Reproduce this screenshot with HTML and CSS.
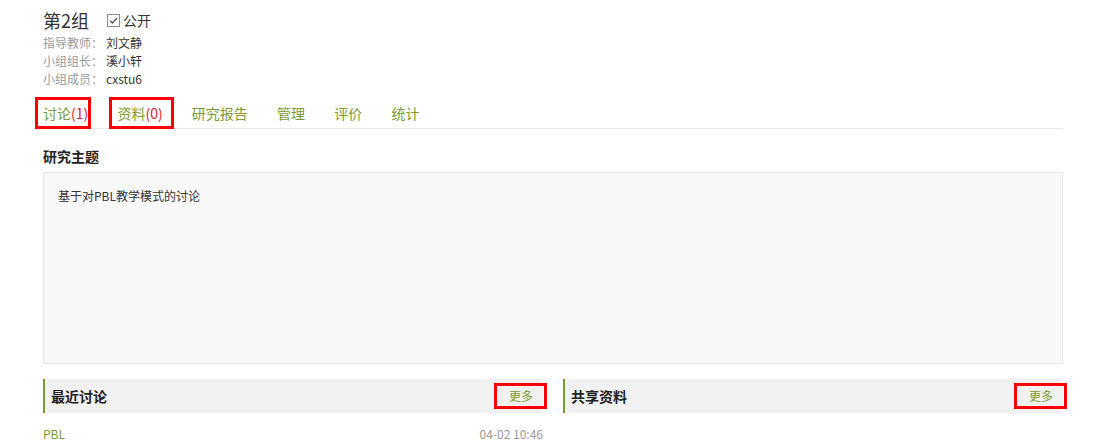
FILE: index.html
```html
<!DOCTYPE html>
<html lang="zh-CN">
  <head>
    <meta charset="UTF-8" />
    <meta name="viewport" content="width=device-width, initial-scale=1.0" />
    <title>第2组</title>
    <link rel="stylesheet" href="styles.css">
  </head>
  <body>
    <div class="page">
      <!-- 小组信息 -->
      <div class="group-head">
        <h1 class="group-name">第2组</h1>
        <label class="public">
          <svg class="check" width="13" height="13" viewBox="0 0 13 13">
            <rect x="0.5" y="0.5" width="12" height="12" fill="#fff" stroke="#8a8a8a" />
            <path d="M3 6.6 L5.4 9 L10 4" fill="none" stroke="#555" stroke-width="1.3" />
          </svg>
          公开
        </label>
      </div>
      <ul class="info">
        <li><span class="label">指导教师：</span>刘文静</li>
        <li><span class="label">小组组长：</span>溪小轩</li>
        <li><span class="label">小组成员：</span>cxstu6</li>
      </ul>

      <!-- 标签页 -->
      <nav class="tabs">
        <a class="tab"><span class="mark mark-1">讨论<span class="count">(1)</span></span></a>
        <a class="tab"><span class="mark mark-2">资料<span class="count">(0)</span></span></a>
        <a class="tab">研究报告</a>
        <a class="tab">管理</a>
        <a class="tab">评价</a>
        <a class="tab">统计</a>
      </nav>

      <!-- 研究主题 -->
      <h2 class="section-title">研究主题</h2>
      <div class="topic">基于对PBL教学模式的讨论</div>

      <!-- 讨论 / 资料 -->
      <div class="panels">
        <section class="panel">
          <div class="panel-head">
            <h3>最近讨论</h3>
            <a class="more mark">更多</a>
          </div>
          <div class="row">
            <a class="row-title">PBL</a>
            <span class="row-time">04-02 10:46</span>
          </div>
        </section>
        <section class="panel">
          <div class="panel-head">
            <h3>共享资料</h3>
            <a class="more mark">更多</a>
          </div>
        </section>
      </div>
    </div>
  </body>
</html>
```

FILE: styles.css
```css
/* ====================== RESET ====================== */
* {
  margin: 0;
  padding: 0;
  box-sizing: border-box;
}
body {
  font-family: "Microsoft YaHei", "Noto Sans CJK SC", sans-serif;
  font-size: 12px;
  color: #333;
  background: #fff;
}
ul {
  list-style: none;
}
a {
  text-decoration: none;
  cursor: pointer;
}

/* ====================== PAGE ====================== */
.page {
  width: 1020px;
  margin-left: 43px;
  padding-top: 8px;
}

/* ================== GROUP HEADER ================== */
.group-head {
  display: flex;
  align-items: center;
  height: 24px;
}
.group-name {
  font-size: 18px;
  font-weight: normal;
  line-height: 24px;
  color: #333;
}
.public {
  display: flex;
  align-items: center;
  gap: 3px;
  margin-left: 18px;
  font-size: 14px;
  line-height: 24px;
  color: #333;
}
.check {
  display: block;
}
.info {
  margin-top: 2px;
}
.info li {
  line-height: 18px;
}
.info .label {
  display: inline-block;
  width: 63px;
  color: #999;
}

/* ======================= TABS ======================= */
.tabs {
  display: flex;
  margin-top: 10px;
  margin-left: -8px;
  border-bottom: 1px solid #e8e8e8;
}
.tab {
  padding: 0 14.6px;
  font-size: 14px;
  line-height: 30px;
  color: #7a9b2e;
}
.tab:first-child {
  padding-left: 8px;
}
.tab .count {
  color: #e0202a;
}

/* 红框标注 */
.mark {
  position: relative;
}
.mark::after {
  content: "";
  position: absolute;
  border: 3px solid #f00;
  pointer-events: none;
}
.mark-1::after {
  left: -8px;
  right: -3px;
  top: -1px;
  bottom: -1px;
}
.mark-2::after {
  left: -8px;
  right: -11px;
  top: -1px;
  bottom: -1px;
}
.tab .mark {
  display: inline-block;
  line-height: 30px;
}

/* ===================== TOPIC ===================== */
.section-title {
  margin-top: 17px;
  font-size: 14px;
  line-height: 20px;
  color: #222;
}
.topic {
  margin-top: 6px;
  height: 192px;
  padding: 15px 14px;
  line-height: 16px;
  background: #f8f8f8;
  border: 1px solid #e5e5e5;
}

/* ===================== PANELS ===================== */
.panels {
  display: flex;
  gap: 20px;
  margin-top: 15px;
}
.panel {
  flex: 1;
}
.panel-head {
  display: flex;
  align-items: center;
  justify-content: space-between;
  height: 34px;
  padding: 0 10px 0 6px;
  background: #f1f1f1;
  border-left: 2px solid #7a9b2e;
}
.panel-head h3 {
  font-size: 14px;
  line-height: 20px;
  color: #222;
}
.more {
  font-size: 12px;
  line-height: 20px;
  color: #7a9b2e;
}
.more::after {
  left: -15px;
  right: -14px;
  top: -3px;
  bottom: -3px;
}
.row {
  display: flex;
  justify-content: space-between;
  margin-top: 11px;
  line-height: 20px;
}
.row-title {
  color: #7a9b2e;
}
.row-time {
  color: #999;
}
```
